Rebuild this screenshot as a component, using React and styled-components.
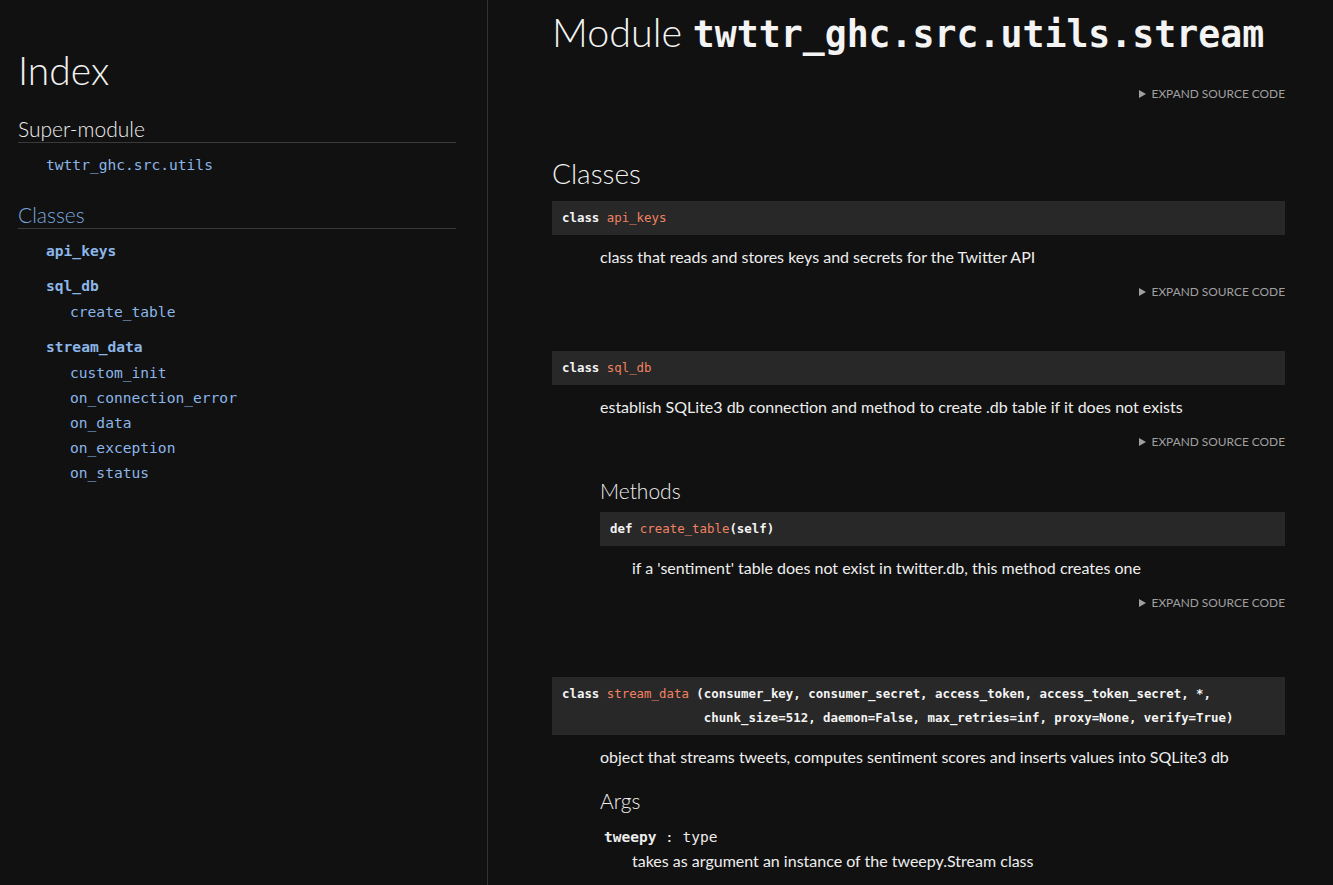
import React from 'react'
import styled, { createGlobalStyle } from 'styled-components'

const GlobalStyle = createGlobalStyle`
  html, body {
    margin: 0;
    padding: 0;
    background: #111111;
    color: #eeeeee;
    font-family: Lato, "Open Sans", sans-serif;
  }
`

const mono = `"DejaVu Sans Mono", "Liberation Mono", monospace`

const classes = [
  { name: 'api_keys', methods: [] },
  { name: 'sql_db', methods: ['create_table'] },
  {
    name: 'stream_data',
    methods: ['custom_init', 'on_connection_error', 'on_data', 'on_exception', 'on_status'],
  },
]

const Sidebar = () => {
  return (
    <Nav>
      <IndexTitle>Index</IndexTitle>
      <NavHeading>Super-module</NavHeading>
      <NavList>
        <NavLink>twttr_ghc.src.utils</NavLink>
      </NavList>
      <NavHeading $link>Classes</NavHeading>
      <NavList>
        {classes.map((c) => (
          <li key={c.name}>
            <ClassLink>{c.name}</ClassLink>
            {c.methods.length > 0 && (
              <MethodList>
                {c.methods.map((m) => (
                  <NavLink key={m}>{m}</NavLink>
                ))}
              </MethodList>
            )}
          </li>
        ))}
      </NavList>
    </Nav>
  )
}

const Expand = ({ top }) => (
  <ExpandRow $top={top}>
    <Arrow />
    EXPAND SOURCE CODE
  </ExpandRow>
)

const App = () => {
  return (
    <>
      <GlobalStyle />
      <Page>
        <Sidebar />
        <Main>
          <Title>
            Module <code>twttr_ghc.src.utils.stream</code>
          </Title>
          <Expand top={26} />

          <SectionTitle>Classes</SectionTitle>

          <Item>
            <Signature>
              <b>class</b> <Name>api_keys</Name>
            </Signature>
            <Doc>class that reads and stores keys and secrets for the Twitter API</Doc>
            <Expand />
          </Item>

          <Item $gap={66}>
            <Signature>
              <b>class</b> <Name>sql_db</Name>
            </Signature>
            <Doc>establish SQLite3 db connection and method to create .db table if it does not exists</Doc>
            <Expand />
            <Members>
              <SubTitle>Methods</SubTitle>
              <Signature>
                <b>def</b> <Name>create_table</Name>
                <b>(self)</b>
              </Signature>
              <Doc $inner>if a 'sentiment' table does not exist in twitter.db, this method creates one</Doc>
              <Expand />
            </Members>
          </Item>

          <Item>
            <Signature>
              <b>class</b> <Name>stream_data</Name>
              <b>
                {' (consumer_key, consumer_secret, access_token, access_token_secret, *,\n                   chunk_size=512, daemon=False, max_retries=inf, proxy=None, verify=True)'}
              </b>
            </Signature>
            <Doc>object that streams tweets, computes sentiment scores and inserts values into SQLite3 db</Doc>
            <Members>
              <SubTitle $top={20}>Args</SubTitle>
              <ArgTerm>
                <b>tweepy</b> : <span>type</span>
              </ArgTerm>
              <Doc $inner $tight>takes as argument an instance of the tweepy.Stream class</Doc>
            </Members>
          </Item>
        </Main>
      </Page>
    </>
  )
}

const Page = styled.div`
  display: flex;
  height: 885px;
  overflow: hidden;
`

const Nav = styled.nav`
  width: 488px;
  flex-shrink: 0;
  border-right: 1px solid #333333;
  padding: 46px 31px 0 18px;
  box-sizing: border-box;
`

const IndexTitle = styled.h1`
  margin: 0 0 22px;
  font-size: 39px;
  font-weight: 300;
  line-height: 48px;
  color: #f2f2f2;
`

const NavHeading = styled.h3`
  margin: 0;
  font-size: 21px;
  font-weight: 300;
  line-height: 26px;
  color: ${(p) => (p.$link ? '#7aa8de' : '#eeeeee')};
  border-bottom: 1px solid #3a3a3a;
`

const NavList = styled.ul`
  list-style: none;
  margin: 0;
  padding: 9px 0 25px 28px;
  display: flex;
  flex-direction: column;
  gap: 10px;
`

const MethodList = styled.ul`
  list-style: none;
  margin: 0;
  padding: 1px 0 0 24px;
  display: flex;
  flex-direction: column;
`

const NavLink = styled.li`
  font-family: ${mono};
  font-size: 14.6px;
  line-height: 25px;
  color: #8cb6e8;
`

const ClassLink = styled.div`
  font-family: ${mono};
  font-size: 14.6px;
  font-weight: bold;
  line-height: 25px;
  color: #8cb6e8;
`

const Main = styled.main`
  width: 733px;
  flex-shrink: 0;
  padding: 7px 0 0 64px;
`

const Title = styled.h1`
  margin: 0;
  font-size: 39.5px;
  font-weight: 300;
  line-height: 50px;
  white-space: nowrap;
  color: #f4f4f4;
  code {
    font-family: ${mono};
    font-weight: bold;
    font-size: 36.5px;
  }
`

const ExpandRow = styled.div`
  display: flex;
  justify-content: flex-end;
  align-items: center;
  gap: 6px;
  margin-top: ${(p) => (p.$top || 17)}px;
  font-size: 11.9px;
  line-height: 16px;
  color: #a0a0a0;
`

const Arrow = styled.span`
  width: 0;
  height: 0;
  border-top: 4px solid transparent;
  border-bottom: 4px solid transparent;
  border-left: 7px solid #a0a0a0;
`

const SectionTitle = styled.h2`
  margin: 54px 0 11px;
  font-size: 28px;
  font-weight: 300;
  line-height: 34px;
  color: #f2f2f2;
`

const Item = styled.section`
  margin-bottom: ${(p) => (p.$gap || 51)}px;
`

const Signature = styled.div`
  background: #282828;
  padding: 5px 10px;
  font-family: ${mono};
  font-size: 12.4px;
  line-height: 24px;
  white-space: pre;
  color: #f4f4f4;
  b {
    font-weight: bold;
  }
`

const Name = styled.span`
  color: #f08262;
`

const Doc = styled.p`
  margin: ${(p) => (p.$tight ? '4px' : '12px')} 0 0 ${(p) => (p.$inner ? '32px' : '48px')};
  font-size: 16px;
  line-height: 20px;
  color: #eeeeee;
`

const Members = styled.div`
  margin-left: 48px;
`

const SubTitle = styled.h3`
  margin: ${(p) => (p.$top || 27)}px 0 7px;
  font-size: 21px;
  font-weight: 300;
  line-height: 28px;
  color: #eeeeee;
`

const ArgTerm = styled.div`
  margin: 12px 0 0 4px;
  font-family: ${mono};
  font-size: 14.5px;
  line-height: 20px;
  color: #eeeeee;
  b {
    font-weight: bold;
  }
`

export default App
